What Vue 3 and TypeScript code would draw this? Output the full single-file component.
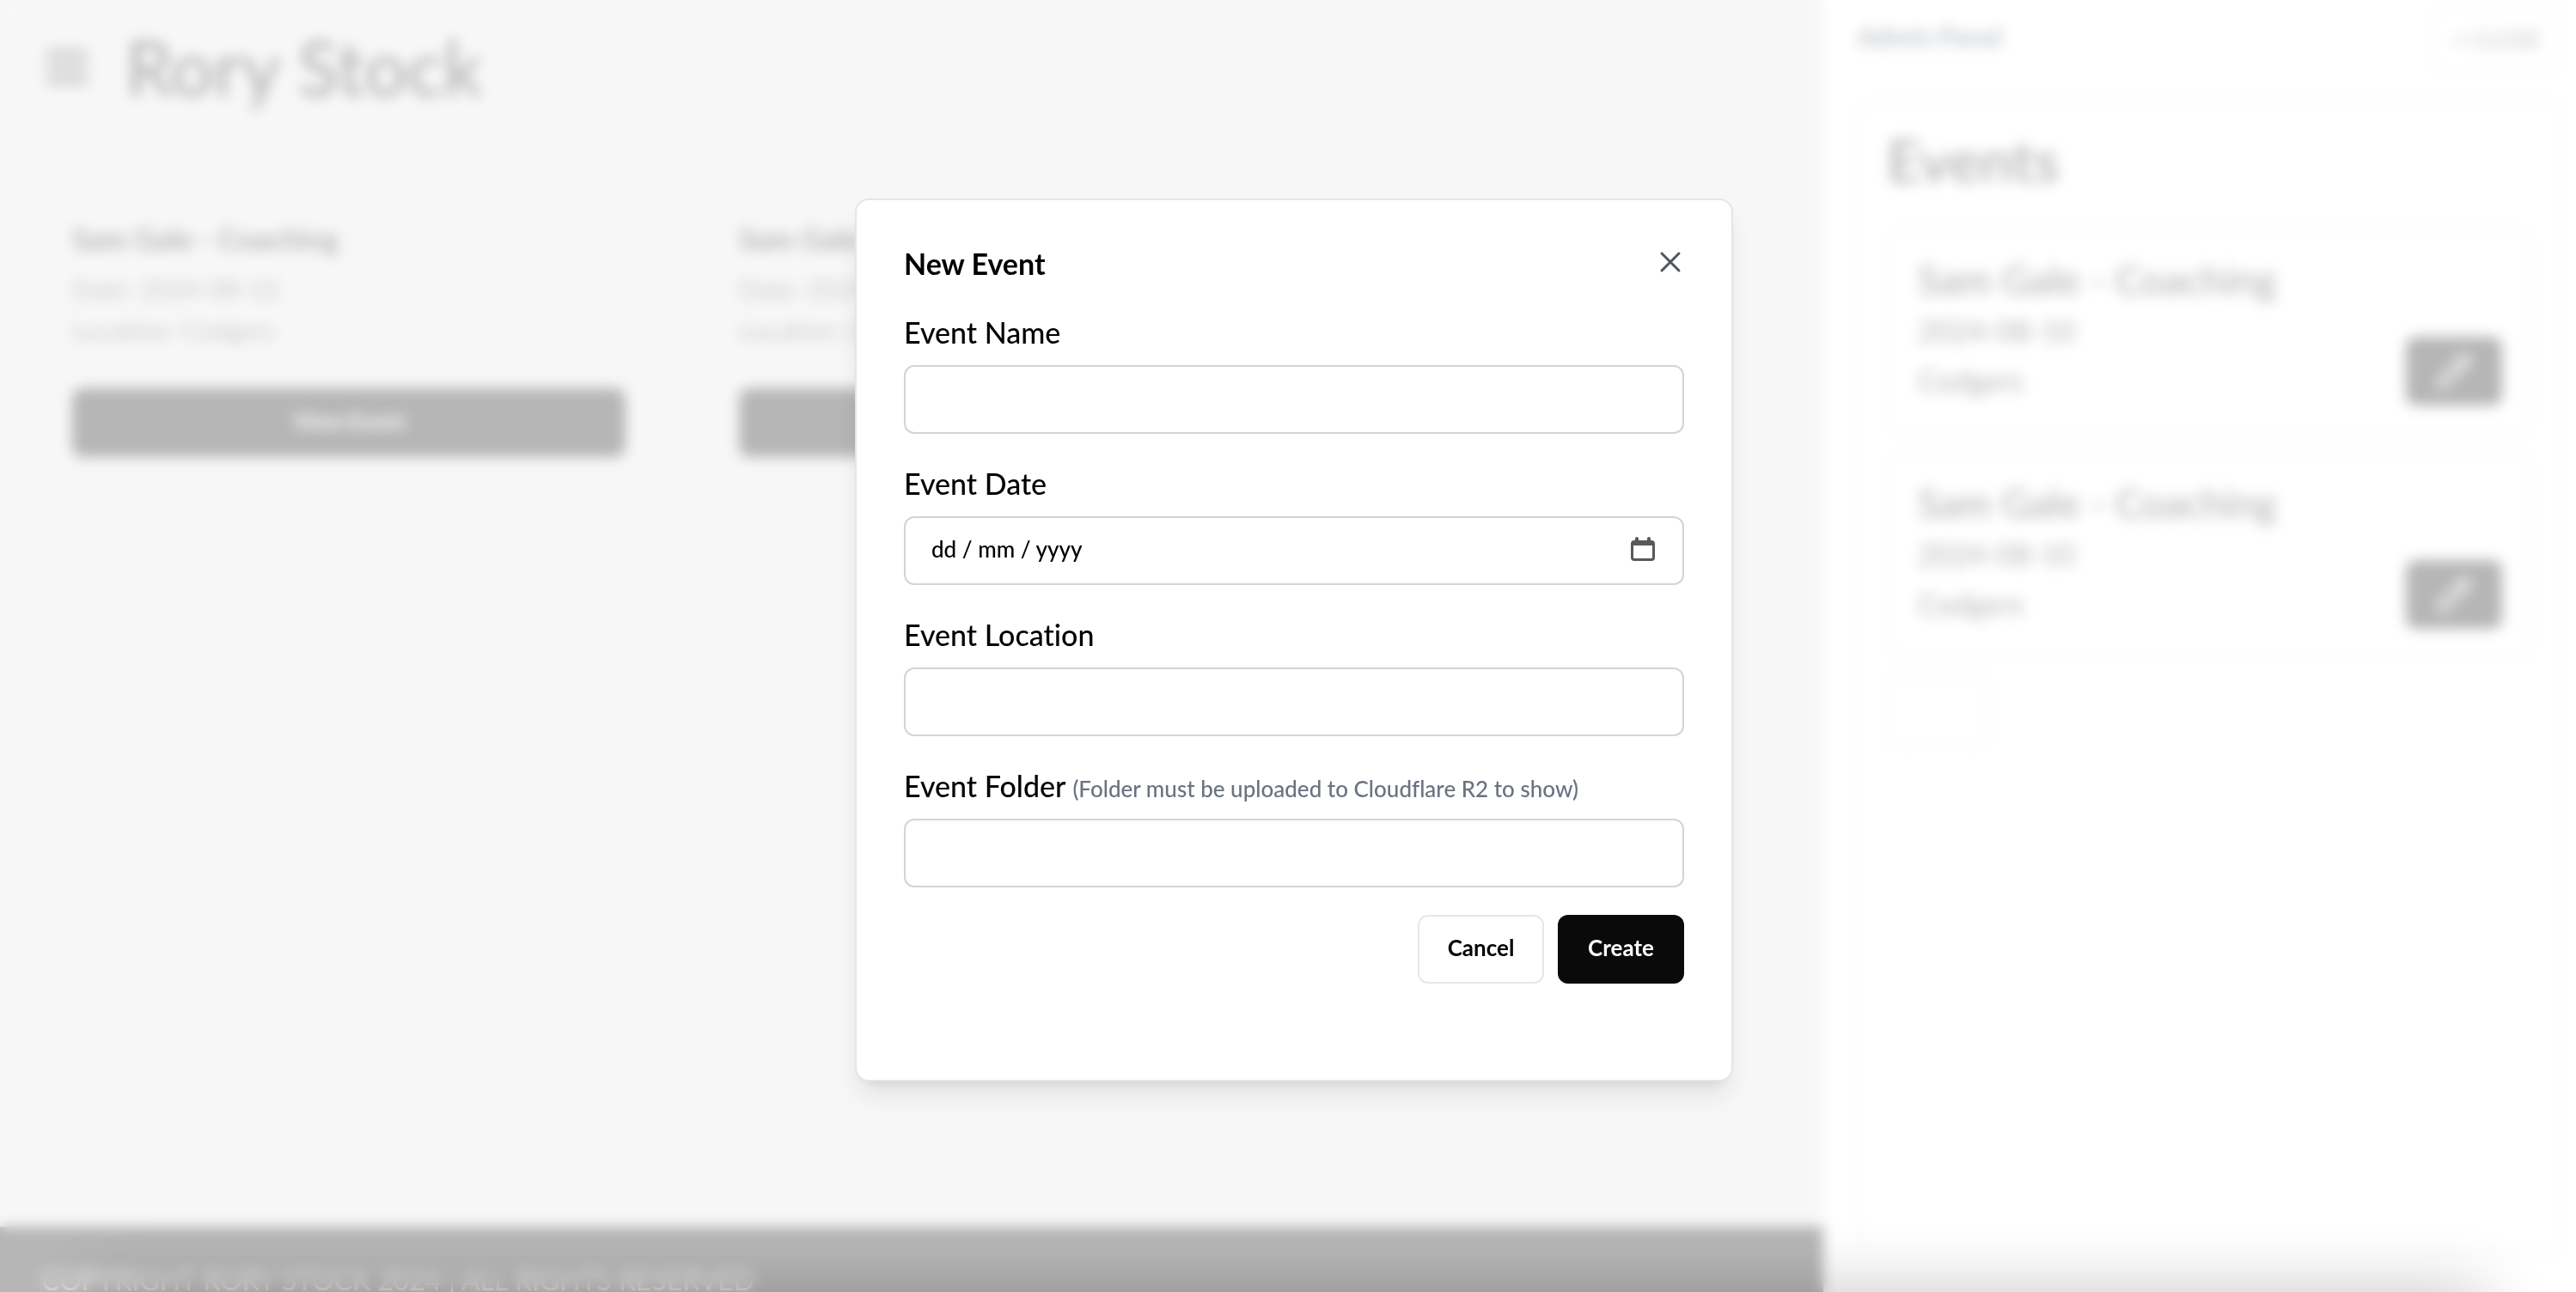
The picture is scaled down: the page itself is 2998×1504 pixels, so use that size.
<script setup lang="ts">
import { reactive } from 'vue'

interface EventItem {
  id: number
  name: string
  date: string
  location: string
}

interface EventForm {
  name: string
  date: string
  location: string
  folder: string
}

const events: EventItem[] = [
  { id: 1, name: 'Sam Gale - Coaching', date: '2024-08-10', location: 'Codgers' },
  { id: 2, name: 'Sam Gale - Coaching', date: '2024-08-10', location: 'Codgers' },
]

const form = reactive<EventForm>({ name: '', date: '', location: '', folder: '' })

function reset(): void {
  form.name = ''
  form.date = ''
  form.location = ''
  form.folder = ''
}
</script>

<template>
  <div class="app">
    <div class="page">
      <div class="site">
        <header class="topbar">
          <button class="menu" type="button" aria-label="Menu">
            <svg viewBox="0 0 48 40" width="48" height="40" fill="none" stroke="currentColor" stroke-width="6">
              <path d="M0 4h48M0 20h48M0 36h48" />
            </svg>
          </button>
          <h1>Rory Stock</h1>
        </header>
        <main class="grid">
          <article v-for="item in events" :key="item.id" class="card">
            <h2>{{ item.name }}</h2>
            <p>Date: {{ item.date }}</p>
            <p>Location: {{ item.location }}</p>
            <button class="view" type="button">View Event</button>
          </article>
        </main>
        <footer class="footer">COPYRIGHT RORY STOCK 2024 | ALL RIGHTS RESERVED</footer>
      </div>

      <aside class="panel">
        <div class="panel-head">
          <span class="panel-title">Admin Panel</span>
          <button class="panel-close" type="button">× CLOSE</button>
        </div>
        <section class="panel-body">
          <h2>Events</h2>
          <div v-for="item in events" :key="item.id" class="row">
            <div>
              <h3>{{ item.name }}</h3>
              <p>{{ item.date }}</p>
              <p>{{ item.location }}</p>
            </div>
            <button class="edit" type="button" aria-label="Edit event">
              <svg viewBox="0 0 24 24" width="44" height="44" fill="none" stroke="currentColor" stroke-width="2" stroke-linecap="round" stroke-linejoin="round">
                <path d="M17 3a2.800 2.800 0 1 1 4 4L7.500 20.500 2 22l1.500-5.500Z" />
                <path d="m15 5 4 4" />
              </svg>
            </button>
          </div>
          <button class="add" type="button" aria-label="Add event"></button>
        </section>
      </aside>
    </div>

    <div class="overlay">
      <form class="modal" role="dialog" aria-labelledby="modal-title" @submit.prevent="reset">
        <div class="modal-head">
          <h2 id="modal-title">New Event</h2>
          <button class="close" type="button" aria-label="Close" @click="reset">
            <svg viewBox="0 0 32 32" width="32" height="32" fill="none" stroke="currentColor" stroke-width="3" stroke-linecap="round">
              <path d="M6 6l20 20M26 6L6 26" />
            </svg>
          </button>
        </div>

        <div class="field">
          <label for="event-name">Event Name</label>
          <input id="event-name" v-model="form.name" type="text" />
        </div>
        <div class="field">
          <label for="event-date">Event Date</label>
          <div class="date">
            <input id="event-date" v-model="form.date" type="text" inputmode="numeric" placeholder="dd / mm / yyyy" />
            <button class="picker" type="button" aria-label="Open calendar">
              <svg viewBox="0 0 28 28" width="28" height="28">
                <path
                  fill="currentColor"
                  fill-rule="evenodd"
                  d="M5 2a2 2 0 0 1 4 0v2h10V2a2 2 0 0 1 4 0v2h1a4 4 0 0 1 4 4v16a4 4 0 0 1-4 4H4a4 4 0 0 1-4-4V8a4 4 0 0 1 4-4h1ZM3 10v14a1 1 0 0 0 1 1h20a1 1 0 0 0 1-1V10Z"
                />
              </svg>
            </button>
          </div>
        </div>
        <div class="field">
          <label for="event-location">Event Location</label>
          <input id="event-location" v-model="form.location" type="text" />
        </div>
        <div class="field">
          <label for="event-folder">Event Folder <small>(Folder must be uploaded to Cloudflare R2 to show)</small></label>
          <input id="event-folder" v-model="form.folder" type="text" />
        </div>

        <div class="actions">
          <button class="btn outline" type="button" @click="reset">Cancel</button>
          <button class="btn solid" type="submit">Create</button>
        </div>
      </form>
    </div>
    <div class="bottom-shade"></div>
  </div>
</template>

<style>
body {
  margin: 0;
}
</style>

<style scoped>
.app {
  position: relative;
  height: 100vh;
  overflow: hidden;
  font-family: Lato, 'Liberation Sans', sans-serif;
  font-variant-ligatures: none;
  color: #0a0a0a;
}

.app * {
  box-sizing: border-box;
}

h1,
h2,
h3,
p {
  margin: 0;
}

button,
input {
  font: inherit;
  color: inherit;
}

button {
  padding: 0;
  border: 0;
  background: none;
}

svg {
  display: block;
}

.page {
  display: flex;
  height: 100%;
}

.site {
  flex: 1;
  min-width: 0;
  display: flex;
  flex-direction: column;
  background: #e5e5e5;
}

.topbar {
  display: flex;
  align-items: center;
  gap: 44px;
  height: 156px;
  padding: 0 54px;
}

.topbar h1 {
  font-size: 88px;
  line-height: 96px;
  font-weight: 500;
}

.grid {
  flex: 1;
  display: grid;
  grid-template-columns: repeat(2, minmax(0, 716px));
  align-content: start;
  gap: 60px;
  padding: 96px 48px 0;
}

.card {
  padding: 0 36px;
}

.card h2 {
  margin-bottom: 8px;
  font-size: 34px;
  line-height: 52px;
  font-weight: 700;
}

.card p {
  font-size: 30px;
  line-height: 48px;
  color: #525252;
}

.view {
  display: block;
  width: 100%;
  height: 80px;
  margin-top: 44px;
  padding-bottom: 4px;
  border-radius: 12px;
  background: #0a0a0a;
  color: #fff;
  font-size: 26px;
  font-weight: 700;
}

.footer {
  height: 76px;
  padding: 40px 48px 0;
  background: #0a0a0a;
  color: #d4d4d4;
  font-size: 32px;
  line-height: 44px;
  white-space: nowrap;
}

.panel {
  flex: 0 1 876px;
  padding: 8px 16px 40px 40px;
  background: #fff;
}

.panel-head {
  display: flex;
  justify-content: space-between;
  align-items: flex-start;
}

.panel-title {
  font-size: 30px;
  line-height: 68px;
  font-weight: 700;
  color: #334155;
}

.panel-close {
  width: 152px;
  height: 76px;
  border: 2px solid #d4d4d4;
  border-radius: 12px;
  font-size: 26px;
  color: #404040;
}

.panel-body {
  height: calc(100% - 112px);
  margin-top: 32px;
  padding: 32px;
  border: 2px solid #d4d4d4;
  border-radius: 16px;
}

.panel-body h2 {
  margin-bottom: 44px;
  font-size: 68px;
  line-height: 72px;
  font-weight: 600;
}

.row {
  display: flex;
  justify-content: space-between;
  align-items: flex-end;
  height: 240px;
  margin-bottom: 20px;
  padding: 32px 34px;
  border: 2px solid #d4d4d4;
  border-radius: 16px;
}

.row h3 {
  font-size: 46px;
  line-height: 60px;
  font-weight: 500;
}

.row p {
  font-size: 34px;
  line-height: 58px;
}

.edit {
  display: grid;
  place-items: center;
  width: 112px;
  height: 80px;
  border-radius: 12px;
  background: #0a0a0a;
  color: #fff;
}

.add {
  width: 120px;
  height: 84px;
  border: 2px solid #d4d4d4;
  border-radius: 12px;
}

.overlay {
  position: absolute;
  inset: 0;
  display: grid;
  place-items: center;
  padding: 0 0 14px 14px;
  background: rgba(255, 255, 255, 0.7);
  backdrop-filter: blur(8px);
}

.modal {
  width: 100%;
  max-width: 1022px;
  padding: 56px 55px 112px;
  border: 2px solid #e5e5e5;
  border-radius: 16px;
  background: #fff;
  color: #000;
  box-shadow:
    0 20px 30px -6px rgba(0, 0, 0, 0.1),
    0 8px 12px -8px rgba(0, 0, 0, 0.1);
}

.modal-head {
  display: flex;
  justify-content: space-between;
  margin-bottom: 32px;
}

.modal-head h2 {
  font-size: 34px;
  line-height: 36px;
  font-weight: 700;
}

.close {
  height: 32px;
  color: #4b5563;
}

.field {
  margin-bottom: 28px;
}

.field label {
  display: block;
  margin-bottom: 8px;
  font-size: 34px;
  line-height: 60px;
  font-weight: 500;
  white-space: nowrap;
}

.field small {
  font-size: 26px;
  line-height: 32px;
  color: #6b7280;
}

.field input {
  display: block;
  width: 100%;
  height: 80px;
  padding: 0 30px 4px;
  border: 2px solid #d4d4d4;
  border-radius: 12px;
  background: #fff;
  font-size: 26px;
  font-weight: 500;
}

.field input::placeholder {
  color: #000;
  opacity: 1;
}

.date {
  position: relative;
}

.picker {
  position: absolute;
  top: 24px;
  right: 34px;
  color: #595959;
}

.actions {
  display: flex;
  justify-content: flex-end;
  gap: 16px;
  padding-top: 4px;
}

.btn {
  width: 147px;
  height: 80px;
  padding-bottom: 4px;
  border-radius: 12px;
  font-size: 26px;
  font-weight: 700;
}

.outline {
  border: 2px solid #e5e7eb;
}

.solid {
  background: #0a0a0a;
  color: #fff;
}

.bottom-shade {
  position: absolute;
  top: 100%;
  left: 108px;
  right: 108px;
  height: 100px;
  box-shadow: 0 0 80px rgba(0, 0, 0, 0.23);
}
</style>
